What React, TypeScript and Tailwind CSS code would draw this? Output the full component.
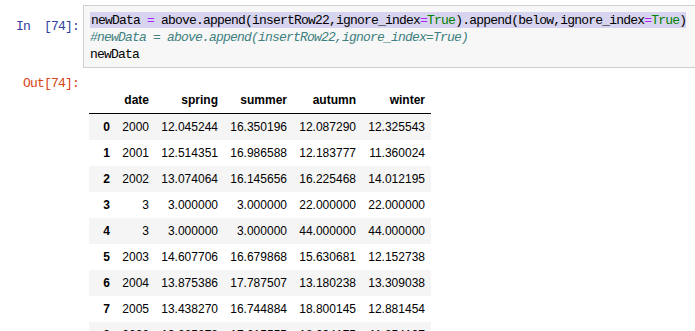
import React from 'react';

const mono = { fontFamily: '"Liberation Mono", "DejaVu Sans Mono", monospace' };

type Row = [string, string, string, string, string, string];

const rows: Row[] = [
  ['0', '2000', '12.045244', '16.350196', '12.087290', '12.325543'],
  ['1', '2001', '12.514351', '16.986588', '12.183777', '11.360024'],
  ['2', '2002', '13.074064', '16.145656', '16.225468', '14.012195'],
  ['3', '3', '3.000000', '3.000000', '22.000000', '22.000000'],
  ['4', '3', '3.000000', '3.000000', '44.000000', '44.000000'],
  ['5', '2003', '14.607706', '16.679868', '15.630681', '12.152738'],
  ['6', '2004', '13.875386', '17.787507', '13.180238', '13.309038'],
  ['7', '2005', '13.438270', '16.744884', '18.800145', '12.881454'],
  ['8', '2006', '13.265878', '17.215555', '18.034175', '11.854197'],
];

const widths = ['w-[27px]', 'w-[39px]', 'w-[69px]', 'w-[69px]', 'w-[69px]', 'w-[69px]'];
const headers = ['', 'date', 'spring', 'summer', 'autumn', 'winter'];

function Op({ children }: { children: React.ReactNode }) {
  return <span className="text-[#aa22ff]">{children}</span>;
}

function Kw({ children }: { children: React.ReactNode }) {
  return <span className="text-[#008000]">{children}</span>;
}

export default function App() {
  return (
    <div className="w-[695px] h-[331px] overflow-hidden bg-white text-black">
      {/* input cell */}
      <div className="flex pt-[5px]">
        <div
          className="w-[83px] shrink-0 pr-[4px] pt-[13px] text-right text-[13px] leading-[17px] tracking-[-0.8px] text-[#303f9f] whitespace-pre"
          style={mono}
        >
          {'In  [74]:'}
        </div>
        <div
          className="flex-1 border-y border-l border-[#cfcfcf] bg-[#f7f7f7] pl-[6px] pt-[6px] pb-[4px] text-[13px] leading-[17px] tracking-[-0.8px] whitespace-pre"
          style={mono}
        >
          <div className="h-[17px]">
            <span className="inline-block h-[16px] bg-[#d7d4f0] pl-[1px]">
              newData <Op>=</Op> above.append(insertRow22,ignore_index<Op>=</Op>
              <Kw>True</Kw>).append(below,ignore_index<Op>=</Op>
              <Kw>True</Kw>)
            </span>
          </div>
          <div className="h-[17px] italic text-[#408080]">
            #newData = above.append(insertRow22,ignore_index=True)
          </div>
          <div className="h-[17px]">newData</div>
        </div>
      </div>

      {/* output */}
      <div className="flex pt-[7px]">
        <div
          className="w-[83px] shrink-0 pr-[4px] text-right text-[13px] leading-[17px] tracking-[-0.8px] text-[#d84315] whitespace-pre"
          style={mono}
        >
          Out[74]:
        </div>
        <div
          className="ml-[6px] mt-[12px] text-[12px]"
          style={{ fontFamily: '"Liberation Sans", Arial, sans-serif' }}
        >
          <div className="flex h-[27px] items-center border-b border-black font-bold">
            {headers.map((h, i) => (
              <div key={i} className={`${widths[i]} pr-[6px] text-right`}>
                {h}
              </div>
            ))}
          </div>
          {rows.map((r, ri) => (
            <div
              key={ri}
              className={`flex h-[26px] items-center ${ri % 2 === 0 ? 'bg-[#f5f5f5]' : 'bg-white'}`}
            >
              {r.map((c, ci) => (
                <div
                  key={ci}
                  className={`${widths[ci]} pr-[6px] text-right ${ci === 0 ? 'font-bold' : ''}`}
                >
                  {c}
                </div>
              ))}
            </div>
          ))}
        </div>
      </div>
    </div>
  );
}
